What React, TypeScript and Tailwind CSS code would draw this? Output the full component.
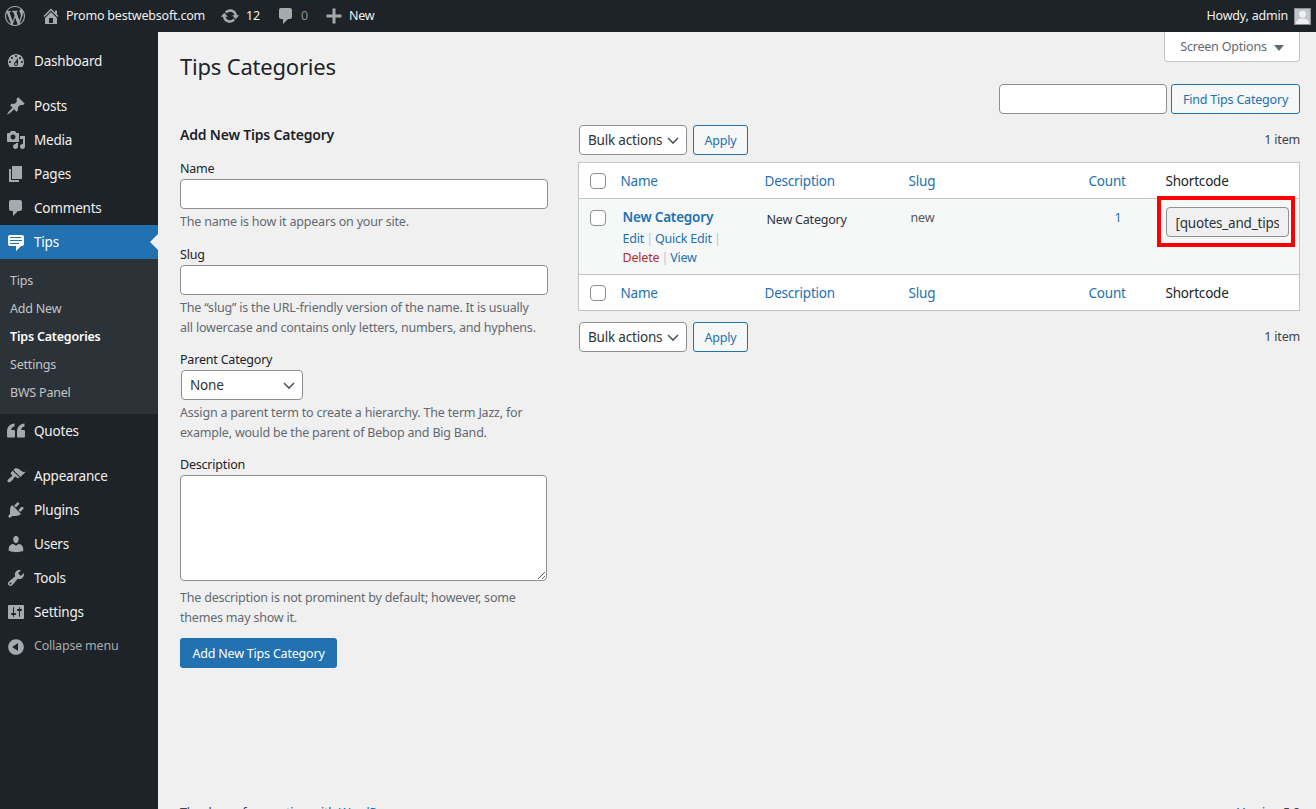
import type { ReactNode } from "react";

const icons = {
  wordpress:
    "M20 10c0-5.51-4.49-10-10-10C4.48 0 0 4.49 0 10c0 5.52 4.48 10 10 10 5.51 0 10-4.48 10-10zM7.78 15.37L4.37 6.22c.55-.02 1.17-.08 1.17-.08.5-.06.44-1.13-.06-1.11 0 0-1.45.11-2.37.11-.18 0-.37 0-.58-.01C4.12 2.69 6.87 1.11 10 1.11c2.33 0 4.45.87 6.05 2.34-.68-.11-1.65.39-1.65 1.58 0 .74.45 1.36.9 2.1.35.61.55 1.36.55 2.46 0 1.49-1.4 5-1.4 5l-3.03-8.37c.54-.02.82-.17.82-.17.5-.05.44-1.25-.06-1.22 0 0-1.44.12-2.38.12-.87 0-2.33-.12-2.33-.12-.5-.03-.56 1.2-.06 1.22l.92.08 1.26 3.41zM17.41 10c.24-.64.74-1.87.43-4.25.7 1.29 1.05 2.71 1.05 4.25 0 3.29-1.73 6.24-4.4 7.78.97-2.59 1.94-5.2 2.92-7.78zM6.1 18.09C3.12 16.65 1.11 13.53 1.11 10c0-1.3.23-2.48.72-3.59C3.25 10.3 4.67 14.2 6.1 18.09zm4.03-6.63l2.58 6.98c-.86.29-1.76.45-2.71.45-.79 0-1.57-.11-2.29-.33.81-2.38 1.62-4.74 2.42-7.1z",
  home: "M16 8.5l1.53 1.53-1.06 1.06L10 4.62l-6.47 6.47-1.06-1.06L10 2.5l4 4v-2h2v4zm-6-2.46l6 5.99V18H4v-5.97zM12 17v-5H8v5h4z",
  update:
    "M10.2 3.28c3.53 0 6.43 2.61 6.92 6h2.08l-3.5 4-3.5-4h2.32c-.45-1.97-2.21-3.45-4.32-3.45-1.45 0-2.73.71-3.54 1.78L4.95 5.66C6.23 4.2 8.11 3.28 10.2 3.28zm-.4 13.44c-3.52 0-6.43-2.61-6.92-6H.8l3.5-4c1.17 1.33 2.33 2.67 3.5 4H5.48c.45 1.97 2.21 3.45 4.32 3.45 1.45 0 2.73-.71 3.54-1.78l1.71 1.95c-1.28 1.46-3.15 2.38-5.25 2.38z",
  comment:
    "M5 2h9c1.1 0 2 .9 2 2v7c0 1.1-.9 2-2 2h-2l-5 5v-5H5c-1.1 0-2-.9-2-2V4c0-1.1.9-2 2-2z",
  plus: "M17.5 8.5v3h-6v6h-3v-6h-6v-3h6v-6h3v6z",
  dashboard:
    "M3.76 16h12.48c1.1-1.37 1.76-3.11 1.76-5 0-4.42-3.58-8-8-8s-8 3.58-8 8c0 1.89.66 3.63 1.76 5zM10 4c.55 0 1 .45 1 1s-.45 1-1 1-1-.45-1-1 .45-1 1-1zM6 6c.55 0 1 .45 1 1s-.45 1-1 1-1-.45-1-1 .45-1 1-1zm8 0c.55 0 1 .45 1 1s-.45 1-1 1-1-.45-1-1 .45-1 1-1zm-5.37 5.55L12 7v6c0 1.1-.9 2-2 2s-2-.9-2-2c0-.57.24-1.08.63-1.45zM4 10c.55 0 1 .45 1 1s-.45 1-1 1-1-.45-1-1 .45-1 1-1zm12 0c.55 0 1 .45 1 1s-.45 1-1 1-1-.45-1-1 .45-1 1-1zm-5 3c0-.55-.45-1-1-1s-1 .45-1 1 .45 1 1 1 1-.45 1-1z",
  post: "M10.44 3.02l1.82-1.82 6.36 6.35-1.83 1.82c-1.05-.68-2.48-.57-3.41.36l-.75.75c-.92.93-1.04 2.35-.35 3.41l-1.83 1.82-2.41-2.41-2.8 2.79c-.42.42-3.38 2.71-3.8 2.29s1.86-3.39 2.28-3.81l2.79-2.79L4.1 9.36l1.83-1.82c1.05.69 2.48.57 3.4-.36l.75-.75c.93-.92 1.05-2.35.36-3.41z",
  media:
    "M13 11V4c0-.55-.45-1-1-1h-1.67L9 1H5L3.67 3H2c-.55 0-1 .45-1 1v7c0 .55.45 1 1 1h10c.55 0 1-.45 1-1zM7 4.5c1.38 0 2.5 1.12 2.5 2.5S8.38 9.5 7 9.5 4.5 8.38 4.5 7 5.62 4.5 7 4.5zM14 6h5v10.5c0 1.38-1.12 2.5-2.5 2.5S14 17.88 14 16.5s1.12-2.5 2.5-2.5c.17 0 .34.02.5.05V9h-3V6zm-4 8.05V13h2v3.5c0 1.38-1.12 2.5-2.5 2.5S7 17.88 7 16.5 8.12 14 9.5 14c.17 0 .34.02.5.05z",
  page: "M6 15V2h10v13H6zm-1 1h8v2H3V5h2v11z",
  tips: "M4 3h12c.55 0 1.02.2 1.41.59S18 4.45 18 5v7c0 .55-.2 1.02-.59 1.41S16.55 14 16 14h-1l-5 5v-5H4c-.55 0-1.02-.2-1.41-.59S2 12.55 2 12V5c0-.55.2-1.02.59-1.41S3.45 3 4 3zm11 2H4v1h11V5zm1 3H4v1h12V8zm-3 3H4v1h9v-1z",
  quote:
    "M2.5 16.5C1.5 16.5 1 16 1 15V10.5C1 6 4 3 8.5 2.5V5.5C6.3 6 5.2 7.3 5.2 9H7.5C8.5 9 9 9.5 9 10.5V15C9 16 8.5 16.5 7.5 16.5zM12.5 16.5C11.5 16.5 11 16 11 15V10.5C11 6 14 3 18.5 2.5V5.5C16.3 6 15.2 7.3 15.2 9H17.5C18.5 9 19 9.5 19 10.5V15C19 16 18.5 16.5 17.5 16.5z",
  appearance:
    "M14.48 11.06L7.41 3.99l1.5-1.5c.5-.56 2.3-.47 3.51.32 1.21.8 1.43 1.28 2.91 2.1 1.18.64 2.45 1.26 4.45.85zm-.71.71L6.7 4.7 4.93 6.47c-.39.39-.39 1.02 0 1.41l1.06 1.06c.39.39.39 1.03 0 1.42-.6.6-1.43 1.11-2.21 1.69-.35.26-.7.53-1.01.84C1.43 13.23.91 15 2 16s2.77-.43 4.13-1.78c.3-.3.58-.65.84-.99.58-.79 1.1-1.62 1.7-2.21.39-.39 1.02-.39 1.41 0l1.06 1.06c.39.39 1.02.39 1.41 0z",
  plugins:
    "M13.11 4.36L9.87 7.6 8 5.73l3.24-3.24c.35-.34 1.05-.2 1.56.32.52.51.66 1.21.31 1.55zm-8 1.77l.91-1.12 9.01 9.01-1.19.84c-.71.71-2.63 1.16-3.82 1.16H6.14L4.9 17.26c-.59.59-1.54.59-2.12 0-.59-.58-.59-1.53 0-2.12l1.24-1.24v-3.88c0-1.13.4-3.19 1.09-3.89zm7.26 3.97l3.24-3.24c.34-.35 1.04-.21 1.55.31.52.51.66 1.21.31 1.55l-3.24 3.25z",
  users:
    "M10 9.25c-2.27 0-2.73-3.44-2.73-3.44C7 4.02 7.82 2 9.97 2c2.16 0 2.98 2.02 2.71 3.81 0 0-.41 3.44-2.68 3.44zm0 2.57L12.72 10c2.39 0 4.52 2.33 4.52 4.53v2.49s-3.65 1.13-7.24 1.13c-3.65 0-7.24-1.13-7.24-1.13v-2.49c0-2.25 1.94-4.48 4.47-4.48z",
  tools:
    "M16.68 9.77c-1.34 1.34-3.3 1.67-4.95.99l-5.41 6.52c-.99.99-2.59.99-3.58 0s-.99-2.59 0-3.57l6.52-5.42c-.68-1.65-.35-3.61.99-4.95 1.28-1.28 3.12-1.62 4.72-1.06l-2.89 2.89 2.82 2.82 2.86-2.87c.53 1.58.18 3.39-1.08 4.65zM3.81 16.21c.4.39 1.04.39 1.43 0 .4-.4.4-1.04 0-1.43-.39-.4-1.03-.4-1.43 0-.39.39-.39 1.03 0 1.43z",
  settings:
    "M18 16V4c0-.55-.45-1-1-1H3c-.55 0-1 .45-1 1v12c0 .55.45 1 1 1h14c.55 0 1-.45 1-1zM8 11h1c.55 0 1 .45 1 1s-.45 1-1 1H8v1.5c0 .28-.22.5-.5.5s-.5-.22-.5-.5V13H6c-.55 0-1-.45-1-1s.45-1 1-1h1V5.5c0-.28.22-.5.5-.5s.5.22.5.5V11zm5-2h-1c-.55 0-1-.45-1-1s.45-1 1-1h1V5.5c0-.28.22-.5.5-.5s.5.22.5.5V7h1c.55 0 1 .45 1 1s-.45 1-1 1h-1v5.5c0 .28-.22.5-.5.5s-.5-.22-.5-.5V9z",
  collapse:
    "M10 2.16c4.33 0 7.84 3.51 7.84 7.84s-3.51 7.84-7.84 7.84S2.16 14.33 2.16 10 5.71 2.16 10 2.16zm2 11.72V6.12L6.18 9.97z",
};

const Icon = ({ name, className }: { name: keyof typeof icons; className: string }) => (
  <svg viewBox="0 0 20 20" fill="currentColor" className={className}>
    <path d={icons[name]} />
  </svg>
);

const Chevron = () => (
  <svg viewBox="0 0 16 16" fill="none" stroke="#50575e" strokeWidth="1.6" className="size-4 shrink-0">
    <path d="M3 6l5 5 5-5" />
  </svg>
);

const MenuItem = ({
  icon,
  label,
  className = "",
}: {
  icon: keyof typeof icons;
  label: string;
  className?: string;
}) => (
  <li className={`flex h-[34px] items-center text-[13.5px] text-[#f0f0f1] ${className}`}>
    <Icon name={icon} className="ml-[6px] mr-[8px] size-5 text-[#a7aaad]" />
    {label}
  </li>
);

const Sidebar = () => (
  <ul className="w-[158px] shrink-0 bg-[#1d2327] pt-[12px]">
    <MenuItem icon="dashboard" label="Dashboard" />
    <MenuItem icon="post" label="Posts" className="mt-[11px]" />
    <MenuItem icon="media" label="Media" />
    <MenuItem icon="page" label="Pages" />
    <MenuItem icon="comment" label="Comments" />
    <li className="relative flex h-[34px] items-center bg-[#2271b1] text-[13.5px] text-white">
      <Icon name="tips" className="ml-[6px] mr-[8px] size-5" />
      Tips
      <span className="absolute right-0 top-[9px] border-y-[8px] border-r-[8px] border-y-transparent border-r-[#f0f0f1]" />
    </li>
    <li className="bg-[#2c3338] pb-[7px] pt-[8px] leading-[28px] text-[#c3c4c7]">
      <div className="pl-[10px]">Tips</div>
      <div className="pl-[10px]">Add New</div>
      <div className="pl-[10px] font-semibold text-white">Tips Categories</div>
      <div className="pl-[10px]">Settings</div>
      <div className="pl-[10px]">BWS Panel</div>
    </li>
    <MenuItem icon="quote" label="Quotes" />
    <MenuItem icon="appearance" label="Appearance" className="mt-[11px]" />
    <MenuItem icon="plugins" label="Plugins" />
    <MenuItem icon="users" label="Users" />
    <MenuItem icon="tools" label="Tools" />
    <MenuItem icon="settings" label="Settings" />
    <li className="flex h-[34px] items-center pt-px text-[#a7aaad]">
      <Icon name="collapse" className="ml-[6px] mr-[8px] size-5" />
      Collapse menu
    </li>
  </ul>
);

const AdminBar = () => (
  <header className="flex h-8 items-center bg-[#1d2327] text-[#f0f0f1]">
    <Icon name="wordpress" className="ml-[5px] size-5 text-[#a7aaad]" />
    <Icon name="home" className="ml-[16px] size-5 text-[#a7aaad]" />
    <span className="ml-[5px]">Promo bestwebsoft.com</span>
    <Icon name="update" className="ml-[15px] size-5 text-[#a7aaad]" />
    <span className="ml-[6px]">12</span>
    <Icon name="comment" className="ml-[16px] size-5 text-[#a7aaad]" />
    <span className="ml-[5px] text-[#8c8f94]">0</span>
    <Icon name="plus" className="ml-[16px] size-5 text-[#a7aaad]" />
    <span className="ml-[5px]">New</span>
    <span className="ml-auto">Howdy, admin</span>
    <span className="ml-[6px] mr-[5px] flex size-[17px] items-end justify-center overflow-hidden border border-[#8c8f94] bg-[#c3c4c7]">
      <svg viewBox="0 0 16 16" fill="#f0f0f1" className="size-[15px]">
        <circle cx="8" cy="5.5" r="3.6" />
        <path d="M1 16c0-4 3-6 7-6s7 2 7 6z" />
      </svg>
    </span>
  </header>
);

const Label = ({ children }: { children: ReactNode }) => (
  <label className="block h-5 leading-[22px] text-[#1d2327]">{children}</label>
);

const Help = ({ children, className = "" }: { children: ReactNode; className?: string }) => (
  <p className={`leading-[20px] text-[#646970] ${className}`}>{children}</p>
);

const TextInput = ({ className }: { className: string }) => (
  <input
    type="text"
    className={`block h-[30px] rounded-[4px] border border-[#8c8f94] bg-white ${className}`}
  />
);

const OutlineButton = ({ children, className = "" }: { children: ReactNode; className?: string }) => (
  <button className={`h-[30px] rounded-[3px] border border-[#2271b1] bg-[#f6f7f7] pt-[2px] text-[#2271b1] ${className}`}>
    {children}
  </button>
);

const AddForm = () => (
  <form className="w-[368px] shrink-0">
    <h2 className="text-[14px] font-semibold leading-[20px] text-[#1d2327]">Add New Tips Category</h2>
    <div className="mt-[13px]">
      <Label>Name</Label>
      <TextInput className="mt-px w-[368px]" />
      <Help className="mt-[3px]">The name is how it appears on your site.</Help>
    </div>
    <div className="mt-[12px]">
      <Label>Slug</Label>
      <TextInput className="mt-px w-[368px]" />
      <Help className="mt-[3px] pr-[8px]">
        The “slug” is the URL-friendly version of the name. It is usually all lowercase and contains only letters,
        numbers, and hyphens.
      </Help>
    </div>
    <div className="mt-[11px]">
      <Label>Parent Category</Label>
      <div className="ml-px mt-px flex h-[30px] w-[122px] items-center justify-between rounded-[4px] border border-[#8c8f94] bg-white pl-[8px] pr-[5px] text-[13.5px] text-[#2c3338]">
        None
        <Chevron />
      </div>
      <Help className="mt-[3px]">
        Assign a parent term to create a hierarchy. The term Jazz, for example, would be the parent of Bebop and Big
        Band.
      </Help>
    </div>
    <div className="mt-[11px]">
      <Label>Description</Label>
      <textarea className="mt-px block h-[106px] w-[367px] rounded-[4px] border border-[#8c8f94] bg-white" />
      <Help className="mt-[7px]">The description is not prominent by default; however, some themes may show it.</Help>
    </div>
    <button className="mt-[10px] h-[30px] w-[157px] rounded-[3px] bg-[#2271b1] pt-[2px] text-white">
      Add New Tips Category
    </button>
  </form>
);

const Checkbox = () => (
  <span className="block size-4 rounded-[4px] border border-[#8c8f94] bg-white" />
);

const Bulk = ({ className = "" }: { className?: string }) => (
  <div className={`flex items-center ${className}`}>
    <div className="ml-px flex h-[30px] w-[108px] items-center justify-between whitespace-nowrap rounded-[4px] border border-[#8c8f94] bg-white pl-[8px] pr-[5px] text-[13.5px] text-[#2c3338]">
      Bulk actions
      <Chevron />
    </div>
    <OutlineButton className="ml-[6px] w-[55px]">Apply</OutlineButton>
    <span className="ml-auto pt-px text-[#3c434a]">1 item</span>
  </div>
);

const HeadRow = ({ foot }: { foot?: boolean }) => (
  <tr className={`h-[36px] text-left text-[13.5px] ${foot ? "border-t" : "border-b"} border-[#c3c4c7]`}>
    <td className="pl-[11px]">
      <Checkbox />
    </td>
    <th className="pl-[8px] pt-px font-normal text-[#2271b1]">Name</th>
    <th className="pl-[8px] pt-px font-normal text-[#2271b1]">Description</th>
    <th className="pl-[8px] pt-px font-normal text-[#2271b1]">Slug</th>
    <th className="pl-[44px] pt-px font-normal text-[#2271b1]">Count</th>
    <th className="pl-[9px] pt-px font-normal text-[#1d2327]">Shortcode</th>
  </tr>
);

const Sep = () => <span className="mx-[-1px] text-[#c3c4c7]">|</span>;

const TermsTable = () => (
  <table className="mt-[7px] w-full table-fixed border border-[#c3c4c7] bg-white">
    <colgroup>
      <col className="w-[34px]" />
      <col className="w-[144px]" />
      <col className="w-[144px]" />
      <col className="w-[144px]" />
      <col className="w-[112px]" />
      <col />
    </colgroup>
    <thead>
      <HeadRow />
    </thead>
    <tbody>
      <tr className="h-[76px] bg-[#f6f7f7] align-top">
        <td className="pl-[11px] pt-[11px]">
          <Checkbox />
        </td>
        <td className="pl-[10px] pt-[8px]">
          <a className="block text-[13.5px] font-semibold leading-[20px] text-[#2271b1]">New Category</a>
          <div className="mt-[2px] leading-[19px] text-[#2271b1]">
            <div>
              Edit <Sep /> Quick Edit <Sep />
            </div>
            <div>
              <span className="text-[#b32d2e]">Delete</span> <Sep /> View
            </div>
          </div>
        </td>
        <td className="pl-[10px] pt-[11px] leading-[20px] text-[#2c3338]">New Category</td>
        <td className="pl-[10px] pt-[9px] leading-[20px] text-[#50575e]">new</td>
        <td className="pl-[70px] pt-[9px] leading-[20px] text-[#2271b1]">1</td>
        <td className="relative pl-[9px] pt-[8px]">
          <input
            readOnly
            value="[quotes_and_tips]"
            className="block h-[30px] w-[123px] rounded-[4px] border border-[#8c8f94] bg-[#f0f0f1] px-[9px] pt-px text-[13.5px] text-[#2c3338]"
          />
          <span className="absolute left-0 top-[-3px] h-[51px] w-[138px] border-[4px] border-[#ff0000]" />
        </td>
      </tr>
    </tbody>
    <tfoot>
      <HeadRow foot />
    </tfoot>
  </table>
);

export default function App() {
  return (
    <div className="flex h-[809px] flex-col overflow-hidden bg-[#f0f0f1] font-['Noto_Sans','Open_Sans',sans-serif] text-[12.5px] tracking-[-0.2px]">
      <AdminBar />
      <div className="flex min-h-0 flex-1">
        <Sidebar />
        <main className="min-w-0 flex-1 pl-[22px] pr-[16px] text-[#3c434a]">
          <div className="flex items-start justify-between">
            <h1 className="pb-px pt-[19px] text-[22px] leading-[30px] text-[#1d2327]">Tips Categories</h1>
            <div className="flex h-[30px] w-[136px] items-center justify-center gap-[7px] rounded-b-[4px] border border-t-0 border-[#c3c4c7] bg-white pt-[2px] text-[#646970]">
              Screen Options
              <span className="border-x-[5px] border-t-[6px] border-x-transparent border-t-[#646970]" />
            </div>
          </div>
          <div className="mt-[2px] flex justify-end gap-[4px]">
            <TextInput className="w-[168px]" />
            <OutlineButton className="w-[129px]">Find Tips Category</OutlineButton>
          </div>
          <div className="mt-[11px] flex gap-[30px]">
            <AddForm />
            <div className="min-w-0 flex-1">
              <Bulk />
              <TermsTable />
              <Bulk className="mt-[11px]" />
            </div>
          </div>
          <footer className="mt-[135px] flex justify-between leading-[20px]">
            <span>
              Thank you for creating with <a className="text-[#2271b1] underline">WordPress</a>.
            </span>
            <span>Version 5.8</span>
          </footer>
        </main>
      </div>
    </div>
  );
}
